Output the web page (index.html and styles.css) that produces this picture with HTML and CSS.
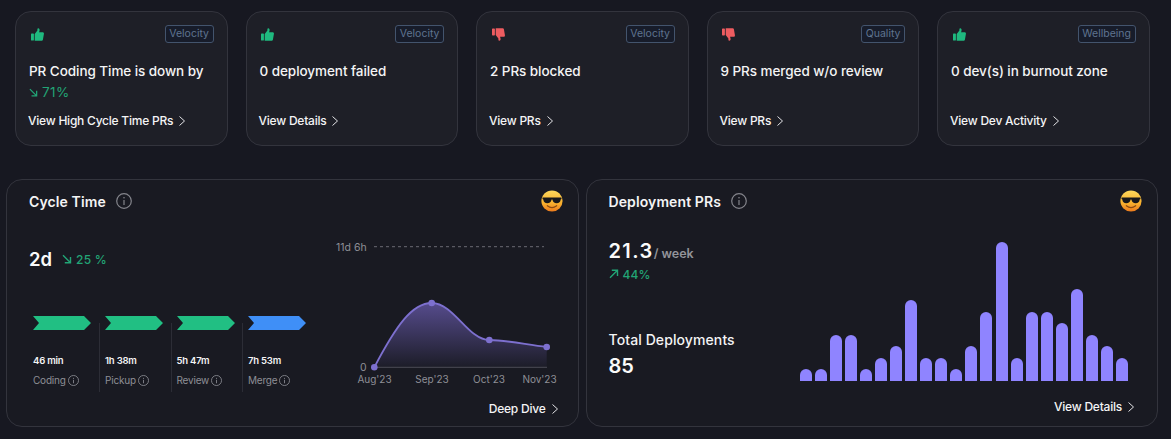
FILE: index.html
```html
<!DOCTYPE html>
<html lang="en">
<head>
<meta charset="utf-8">
<title>Dashboard</title>
<link rel="stylesheet" href="styles.css">
</head>
<body>
<svg class="defs" width="0" height="0" aria-hidden="true">
  <defs>
    <symbol id="thumb" viewBox="0 0 13 13">
      <rect x="0" y="5.600" width="2.900" height="7" rx=".7"/>
      <path d="M3.700 5.900 6.400 2.600V.9C6.400.2 7.900-.2 8.400.9c.4 1 .1 2.300-.4 3.400h3.600c1 0 1.500.8 1.300 1.600l-1 5.800c-.2.8-.7 1-1.400 1H3.700Z"/>
    </symbol>
    <symbol id="chev" viewBox="0 0 8 12">
      <path d="M1.500 1.500 6.500 6l-5 4.500" fill="none" stroke="currentColor" stroke-width="1"/>
    </symbol>
    <symbol id="info" viewBox="0 0 16 16">
      <circle cx="8" cy="8" r="7.300" fill="none" stroke="currentColor" stroke-width="1.200"/>
      <path d="M8 7v5" stroke="currentColor" stroke-width="1.200"/>
      <circle cx="8" cy="4.700" r=".8" fill="currentColor"/>
    </symbol>
    <symbol id="down" viewBox="0 0 10 10">
      <path d="M1 1.200 8.500 8.700M8.500 3v5.700H2.800" fill="none" stroke="currentColor" stroke-width="1.400"/>
    </symbol>
    <symbol id="up" viewBox="0 0 10 10">
      <path d="M1 8.800 8.500 1.300M2.800 1.300h5.700V7" fill="none" stroke="currentColor" stroke-width="1.400"/>
    </symbol>
    <linearGradient id="face" x1="0" y1="0" x2="0" y2="1">
      <stop offset="0" stop-color="#fcd75c"/>
      <stop offset=".6" stop-color="#f8b02e"/>
      <stop offset="1" stop-color="#ec7a1c"/>
    </linearGradient>
    <linearGradient id="area" x1="0" y1="0" x2="0" y2="1">
      <stop offset="0" stop-color="#6a5cb0" stop-opacity=".75"/>
      <stop offset="1" stop-color="#6a5cb0" stop-opacity=".04"/>
    </linearGradient>
    <symbol id="cool" viewBox="0 0 22 22">
      <circle cx="11" cy="11" r="10.600" fill="url(#face)"/>
      <path d="M1.500 7.600h19v1.500l-.8.4c-.3 2.500-1.700 3.800-4 3.800-2.500 0-3.800-1.500-4.200-3.500-.3-.5-.7-.5-1 0-.4 2-1.700 3.500-4.200 3.500-2.300 0-3.700-1.300-4-3.800l-.8-.4Z" fill="#17171b"/>
      <path d="M6.300 15.700c2.800 2.300 6.600 2.300 9.400 0" fill="none" stroke="#8a4a12" stroke-width="1.100" stroke-linecap="round"/>
    </symbol>
  </defs>
</svg>

<main class="page">
  <section class="insights">
    <article class="card">
      <div class="card-head"><svg class="thumb good"><use href="#thumb"/></svg><span class="tag">Velocity</span></div>
      <p class="card-title">PR Coding Time is down by</p>
      <p class="card-delta"><svg class="arrow-sm"><use href="#down"/></svg>71%</p>
      <a class="link card-link">View High Cycle Time PRs<svg class="chev"><use href="#chev"/></svg></a>
    </article>
    <article class="card">
      <div class="card-head"><svg class="thumb good"><use href="#thumb"/></svg><span class="tag">Velocity</span></div>
      <p class="card-title">0 deployment failed</p>
      <a class="link card-link">View Details<svg class="chev"><use href="#chev"/></svg></a>
    </article>
    <article class="card">
      <div class="card-head"><svg class="thumb bad"><use href="#thumb"/></svg><span class="tag">Velocity</span></div>
      <p class="card-title">2 PRs blocked</p>
      <a class="link card-link">View PRs<svg class="chev"><use href="#chev"/></svg></a>
    </article>
    <article class="card">
      <div class="card-head"><svg class="thumb bad"><use href="#thumb"/></svg><span class="tag">Quality</span></div>
      <p class="card-title">9 PRs merged w/o review</p>
      <a class="link card-link">View PRs<svg class="chev"><use href="#chev"/></svg></a>
    </article>
    <article class="card">
      <div class="card-head"><svg class="thumb good"><use href="#thumb"/></svg><span class="tag">Wellbeing</span></div>
      <p class="card-title">0 dev(s) in burnout zone</p>
      <a class="link card-link">View Dev Activity<svg class="chev"><use href="#chev"/></svg></a>
    </article>
  </section>

  <section class="panels">
    <article class="panel">
      <header class="panel-head">
        <h2 class="panel-title">Cycle Time<svg class="info-lg"><use href="#info"/></svg></h2>
        <svg class="emoji"><use href="#cool"/></svg>
      </header>
      <div class="cycle-body">
        <div class="cycle-left">
          <div class="metric"><span class="metric-value short">2d</span><span class="metric-delta"><svg class="arrow-md"><use href="#down"/></svg>25 %</span></div>
          <div class="stages">
            <div class="stage">
              <svg class="chevron coding" viewBox="0 0 58 14"><path d="M0 0H51L58 7 51 14H0L6 7Z"/></svg>
              <strong class="stage-time">46 min</strong>
              <span class="stage-name">Coding<svg class="info-sm"><use href="#info"/></svg></span>
            </div>
            <div class="stage">
              <svg class="chevron coding" viewBox="0 0 58 14"><path d="M0 0H51L58 7 51 14H0L6 7Z"/></svg>
              <strong class="stage-time">1h 38m</strong>
              <span class="stage-name">Pickup<svg class="info-sm"><use href="#info"/></svg></span>
            </div>
            <div class="stage">
              <svg class="chevron coding" viewBox="0 0 58 14"><path d="M0 0H51L58 7 51 14H0L6 7Z"/></svg>
              <strong class="stage-time">5h 47m</strong>
              <span class="stage-name">Review<svg class="info-sm"><use href="#info"/></svg></span>
            </div>
            <div class="stage">
              <svg class="chevron merge" viewBox="0 0 58 14"><path d="M0 0H51L58 7 51 14H0L6 7Z"/></svg>
              <strong class="stage-time">7h 53m</strong>
              <span class="stage-name">Merge<svg class="info-sm"><use href="#info"/></svg></span>
            </div>
          </div>
        </div>
        <svg class="trend" viewBox="0 0 232 152">
          <text class="axis big" x="6" y="12.500">11d 6h</text>
          <line class="dash" x1="44" y1="8.700" x2="214" y2="8.700"/>
          <path class="trend-area" d="M44.300 129.300C66 88 82 65 101.700 65 124 65 138 102 159.300 102 176 102 198 107 216.700 109V129.300Z"/>
          <line class="base" x1="44" y1="129.300" x2="217" y2="129.300"/>
          <path class="trend-line" d="M44.300 129.300C66 88 82 65 101.700 65 124 65 138 102 159.300 102 176 102 198 107 216.700 109"/>
          <circle class="dot" cx="44.300" cy="129.300" r="3.300"/>
          <circle class="dot" cx="101.700" cy="65" r="3.300"/>
          <circle class="dot" cx="159.300" cy="102" r="3.300"/>
          <circle class="dot" cx="216.700" cy="109" r="3.300"/>
          <text class="axis big" x="30" y="133">0</text>
          <text class="axis mid" x="44.500" y="145">Aug'23</text>
          <text class="axis mid" x="102" y="145">Sep'23</text>
          <text class="axis mid" x="159" y="145">Oct'23</text>
          <text class="axis mid" x="209.500" y="145">Nov'23</text>
        </svg>
      </div>
      <footer class="panel-foot"><a class="link">Deep Dive<svg class="chev"><use href="#chev"/></svg></a></footer>
    </article>

    <article class="panel">
      <header class="panel-head">
        <h2 class="panel-title">Deployment PRs<svg class="info-lg"><use href="#info"/></svg></h2>
        <svg class="emoji"><use href="#cool"/></svg>
      </header>
      <div class="deploy-body">
        <div class="deploy-left">
          <p class="rate"><span class="metric-value spaced">21.3</span><span class="rate-unit">/ week</span></p>
          <p class="rate-delta"><svg class="arrow-md"><use href="#up"/></svg>44%</p>
          <p class="total-label">Total Deployments</p>
          <p class="metric-value total-value">85</p>
        </div>
        <div class="bars">
          <i class="bar" style="height:12px"></i>
          <i class="bar" style="height:12px"></i>
          <i class="bar" style="height:46px"></i>
          <i class="bar" style="height:46px"></i>
          <i class="bar" style="height:12px"></i>
          <i class="bar" style="height:23px"></i>
          <i class="bar" style="height:35px"></i>
          <i class="bar" style="height:81px"></i>
          <i class="bar" style="height:23px"></i>
          <i class="bar" style="height:23px"></i>
          <i class="bar" style="height:12px"></i>
          <i class="bar" style="height:35px"></i>
          <i class="bar" style="height:69px"></i>
          <i class="bar" style="height:139px"></i>
          <i class="bar" style="height:23px"></i>
          <i class="bar" style="height:69px"></i>
          <i class="bar" style="height:69px"></i>
          <i class="bar" style="height:58px"></i>
          <i class="bar" style="height:92px"></i>
          <i class="bar" style="height:46px"></i>
          <i class="bar" style="height:35px"></i>
          <i class="bar" style="height:23px"></i>
        </div>
      </div>
      <footer class="panel-foot deploy-foot"><a class="link">View Details<svg class="chev"><use href="#chev"/></svg></a></footer>
    </article>
  </section>
</main>
</body>
</html>
```
FILE: styles.css
```css
* { box-sizing: border-box; }
html, body { margin: 0; padding: 0; }
body {
  width: 1171px;
  height: 439px;
  overflow: hidden;
  background: #171821;
  color: #f4f4f5;
  font-family: Inter, "Liberation Sans", sans-serif;
}
p, h2 { margin: 0; }
.defs { position: absolute; }

.insights {
  display: flex;
  gap: 18px;
  padding: 11px 21.500px 0 15px;
}
.card {
  flex: 1 1 0;
  min-width: 0;
  height: 135px;
  display: flex;
  flex-direction: column;
  padding: 13px 13px 15px;
  background: #1e1f27;
  border: 1px solid #33343d;
  border-radius: 16px;
}
.card-head {
  display: flex;
  justify-content: space-between;
  align-items: center;
  height: 18px;
  padding-left: 1.500px;
}
.thumb { width: 13px; height: 13px; }
.good { fill: #1fb97f; }
.bad { fill: #ee5c60; transform: scale(1, -1); }
.tag {
  height: 18px;
  padding: 0 3.500px;
  font-size: 10.500px;
  line-height: 16px;
  color: #5f7490;
  background: #171c2a;
  border: 1px solid #43546d;
  border-radius: 3px;
}
.card-title {
  margin-top: 18px;
  font-size: 13.500px;
  line-height: 20px;
  font-weight: 500;
  letter-spacing: -.06px;
}
.card-delta {
  display: flex;
  align-items: center;
  font-size: 13.500px;
  line-height: 22px;
  color: #22a576;
  letter-spacing: .4px;
}
.arrow-sm { width: 9px; height: 9px; margin-right: 4px; }
.link {
  display: flex;
  align-items: center;
  font-size: 12px;
  line-height: 19px;
  font-weight: 500;
  letter-spacing: -.23px;
  color: #f4f4f5;
}
.card-link { margin-top: auto; margin-left: -1px; }
.chev { width: 8px; height: 12px; margin-left: 5px; color: #e4e4e7; }

.panels {
  display: flex;
  gap: 7px;
  margin-top: 33px;
  padding: 0 13px 0 6px;
}
.panel {
  flex: 1 1 0;
  min-width: 0;
  height: 248px;
  display: flex;
  flex-direction: column;
  padding: 10px 15px 0 22px;
  background: #191a22;
  border: 1px solid #33343d;
  border-radius: 16px;
}
.panel-head {
  display: flex;
  justify-content: space-between;
  height: 48px;
}
.panel-title {
  display: flex;
  align-items: center;
  gap: 10px;
  height: 22px;
  font-size: 14px;
  font-weight: 600;
  letter-spacing: .1px;
}
.info-lg { width: 16px; height: 16px; color: #84858c; }
.emoji { width: 22px; height: 22px; }

.cycle-body { display: flex; height: 152px; }
.cycle-left { width: 301px; flex: none; padding-top: 9px; }
.metric { display: flex; align-items: center; gap: 10px; height: 24px; }
.metric-value { font-size: 20px; line-height: 24px; font-weight: 600; color: #fafafa; }
.short { font-size: 18.500px; }
.spaced { letter-spacing: 1.400px; }
.metric-delta {
  display: flex;
  align-items: center;
  font-size: 12px;
  color: #22a576;
  letter-spacing: .2px;
  font-weight: 500;
}
.arrow-md { width: 10px; height: 10px; margin-right: 4px; }
.stages { display: flex; margin-top: 52px; padding-left: 4px; }
.stage {
  width: 71.500px;
  height: 69px;
  padding-left: 5px;
  border-left: 1px solid #2c2d36;
  display: flex;
  flex-direction: column;
}
.stage:first-child { width: 66px; padding-left: 0; border-left: 0; }
.chevron { width: 58px; height: 14px; margin-top: -7px; flex: none; }
.coding { fill: #21bf83; }
.merge { fill: #3f8ff7; }
.stage-time {
  margin-top: 25px;
  font-size: 9.500px;
  line-height: 12px;
  font-weight: 600;
  letter-spacing: -.2px;
  color: #f4f4f5;
}
.stage-name {
  display: flex;
  align-items: center;
  gap: 2px;
  margin-top: 7px;
  font-size: 10px;
  line-height: 13px;
  letter-spacing: -.2px;
  color: #8e8f96;
}
.info-sm { width: 11px; height: 11px; }

.trend { width: 232px; height: 152px; flex: none; }
.axis { font-size: 10px; fill: #8e8f96; }
.big { font-size: 10.500px; }
.mid { text-anchor: middle; }
.dash { stroke: #6a6b73; stroke-width: 1; stroke-dasharray: 3 3; }
.base { stroke: #4b4c55; stroke-width: 1; }
.trend-area { fill: url(#area); }
.trend-line { fill: none; stroke: #7d70cf; stroke-width: 1.800; }
.dot { fill: #7d70cf; }

.panel-foot {
  display: flex;
  justify-content: flex-end;
  margin-top: 9px;
  padding-right: 4px;
}

.deploy-body { display: flex; height: 152px; }
.deploy-left { width: 191px; flex: none; padding-top: 1px; }
.rate { display: flex; align-items: baseline; height: 24px; }
.rate-unit { font-size: 12.500px; font-weight: 600; color: #93949a; }
.rate-delta {
  display: flex;
  align-items: center;
  height: 18px;
  margin-top: 2px;
  font-size: 12px;
  color: #22a576;
  letter-spacing: .1px;
  font-weight: 500;
}
.total-label {
  margin-top: 47px;
  font-size: 14px;
  line-height: 20px;
  font-weight: 500;
  letter-spacing: .1px;
}
.total-value { margin-top: 3.500px; }
.bars {
  display: flex;
  align-items: flex-end;
  gap: 3.080px;
  height: 143px;
}
.bar {
  display: block;
  width: 12px;
  flex: none;
  background: #8f84ff;
  border-radius: 6px 6px 0 0;
}
.deploy-foot { margin-top: 7px; padding-right: 7px; }
```
